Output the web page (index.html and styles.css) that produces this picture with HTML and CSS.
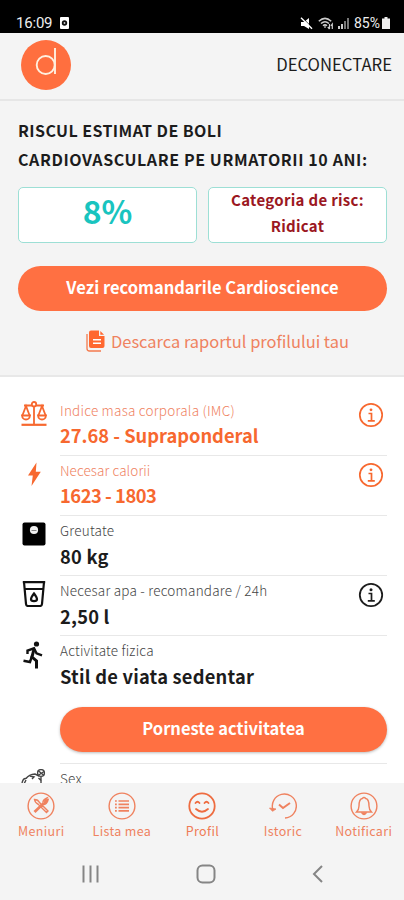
FILE: index.html
```html
<!DOCTYPE html>
<html lang="ro">
<head>
<meta charset="utf-8">
<title>Profil</title>
<link rel="stylesheet" href="styles.css">
</head>
<body>
<div class="phone">
  <div class="status">
    <span class="clock">16:09</span>
    <svg class="rec" width="9" height="12" viewBox="0 0 9 12"><rect width="9" height="12" rx="1" fill="#fff"/><circle cx="4.5" cy="6" r="2.7" fill="#111"/><circle cx="4.5" cy="6" r=".9" fill="#ccc"/></svg>
    <svg class="mute" width="13" height="13" viewBox="0 0 13 13"><path d="M1 5h3l5-4v11L4 9H1z" fill="#fff"/><path d="M2 .5l11 11" stroke="#000" stroke-width="1"/><path d="M1 .7l11 11" stroke="#fff" stroke-width="1.4"/></svg>
    <svg class="wifi" width="16" height="13" viewBox="0 0 16 13" fill="none" stroke="#ccc" stroke-width="1.5"><path d="M.8 4.2Q7 -1.5 13.2 4.2M3 6.5q4-3.5 8 0M5 8.8q2-1.8 4 0"/><path d="M7 9v2M11.5 7v5M9.8 10l1.7 2M14.3 12V7l-1.4 1.8" stroke-width="1.2"/></svg>
    <svg class="signal" width="11" height="11" viewBox="0 0 11 11"><path d="M0 8h2v3H0zM3 6h2v5H3z" fill="#ccc"/><path d="M6 3h2v8H6zM9 0h2v11H9z" fill="#777"/></svg>
    <span class="percent">85%</span>
    <svg class="battery" width="8" height="12" viewBox="0 0 8 12"><path d="M2.500 0h3v1.500H8V12H0V1.500h2.500z" fill="#eee"/></svg>
  </div>
  <header class="header">
    <svg class="logo" width="50" height="50" viewBox="0 0 50 50"><circle cx="25" cy="25" r="25" fill="#ff6f3f"/><g fill="none" stroke="#fff0df" stroke-width="1.9"><circle cx="24.700" cy="25" r="9"/><path d="M34 8v26"/></g></svg>
    <span class="logout">DECONECTARE</span>
  </header>
  <section class="risk">
    <h1 class="title"><span class="t1">RISCUL ESTIMAT DE BOLI</span><br><span class="t2">CARDIOVASCULARE PE URMATORII 10 ANI:</span></h1>
    <div class="cards">
      <div class="card score">8%</div>
      <div class="card category"><span>Categoria de risc:</span><span class="level">Ridicat</span></div>
    </div>
    <div class="button primary"><span>Vezi recomandarile Cardioscience</span></div>
    <div class="download">
      <svg width="19" height="22" viewBox="0 0 19 22"><path d="M5 .5h8v5.500h5.500V16a2 2 0 0 1-2 2H5a2 2 0 0 1-2-2V2.500a2 2 0 0 1 2-2z" fill="#ff6830"/><path d="M14.300 1l3.800 3.700h-3.800z" fill="#ff6830"/><path d="M7 9.700h8M7 13.200h8" stroke="#fff" stroke-width="1.400"/><path d="M1 4v14.500Q1 21 3.500 21H15" fill="none" stroke="#f47a4d" stroke-width="1.300"/></svg>
      <span>Descarca raportul profilului tau</span>
    </div>
  </section>
  <main class="list">
    <article class="row orange">
      <svg class="icon" width="26" height="26" viewBox="0 0 26 26" fill="none" stroke="currentColor" stroke-width="1.800"><path d="M.5 23.800h25" stroke-width="2.200"/><path d="M13 4v20M3 4.500h20M1.200 15L5 5l3.800 10M17.200 15L21 5l3.800 10"/><circle cx="13" cy="3.200" r="2.200" fill="#fff"/><path d="M1 14.500h8q-.5 4-4 4t-4-4zM17 14.500h8q-.5 4-4 4t-4-4z" fill="#fff"/></svg>
      <div class="content"><div class="label l1">Indice masa corporala (IMC)</div><div class="value v1">27.68 - Supraponderal</div></div>
      <svg class="info" width="26" height="26" viewBox="0 0 26 26" fill="none" stroke="currentColor"><circle cx="13" cy="13" r="11.200" stroke-width="1.700"/><path d="M10.500 11.500h3v7M9.800 18.800h7" stroke-width="1.700"/><circle cx="13" cy="7.800" r="1.400" fill="currentColor" stroke="none"/></svg>
    </article>
    <article class="row orange">
      <svg class="icon" width="26" height="26" viewBox="0 0 26 26"><path d="M15.500 1.500L7 14.500h4.800L10.500 25l9.300-14.300h-5z" fill="currentColor"/></svg>
      <div class="content"><div class="label l2">Necesar calorii</div><div class="value v2">1623 - 1803</div></div>
      <svg class="info" width="26" height="26" viewBox="0 0 26 26" fill="none" stroke="currentColor"><circle cx="13" cy="13" r="11.200" stroke-width="1.700"/><path d="M10.500 11.500h3v7M9.800 18.800h7" stroke-width="1.700"/><circle cx="13" cy="7.800" r="1.400" fill="currentColor" stroke="none"/></svg>
    </article>
    <article class="row">
      <svg class="icon" width="26" height="26" viewBox="0 0 26 26"><rect x="1.500" y="1.500" width="23" height="23" rx="2" fill="#000"/><circle cx="13" cy="9" r="4.100" fill="#f0f0f0"/><path d="M10.500 9.500h5" stroke="#888" stroke-width="1"/></svg>
      <div class="content"><div class="label l3">Greutate</div><div class="value v3">80 kg</div></div>
    </article>
    <article class="row">
      <svg class="icon" width="26" height="26" viewBox="0 0 26 26" fill="none" stroke="#111" stroke-width="2.200"><path d="M1.800 1.200h22.400M3 1l2 22q.2 2 2 2h12q1.800 0 2-2l2-22M4 8h18"/><path d="M13 12.500q-6 7.700 0 7.700t0-7.700z"/></svg>
      <div class="content"><div class="label l4">Necesar apa - recomandare / 24h</div><div class="value v4">2,50 l</div></div>
      <svg class="info" width="26" height="26" viewBox="0 0 26 26" fill="none" stroke="currentColor"><circle cx="13" cy="13" r="11.200" stroke-width="1.800"/><path d="M10.500 11.500h3v7M9.800 18.800h7" stroke-width="1.700"/><circle cx="13" cy="7.800" r="1.500" fill="currentColor" stroke="none"/></svg>
    </article>
    <article class="row activity">
      <svg class="icon" width="26" height="28" viewBox="0 0 26 28" fill="none" stroke="#111" stroke-width="2.400"><circle cx="15.500" cy="3" r="2.600" fill="#111" stroke="none"/><path d="M6.500 13V9.500L13 7.300l2.500 5 5.500 2"/><path d="M13 8l-2 8 4.500 4v7.500" stroke-width="3"/><path d="M11 15l-2 6-6.500-1.300"/></svg>
      <div class="content"><div class="label l5">Activitate fizica</div><div class="value v5">Stil de viata sedentar</div><div class="button start"><span>Porneste activitatea</span></div></div>
    </article>
    <article class="row last">
      <svg class="icon" width="26" height="26" viewBox="0 0 26 26" fill="none" stroke="#444" stroke-width="1.400"><path d="M1 14q1-5 4-4.500M5 9.500q3-4 9-4.500l4 2M9 7l4 1-2 2M3 15l2-4M20 8v6M17.500 9l3 3"/><circle cx="20" cy="4" r="3.400"/><path d="M17 1.500l6 5M17 6.500l6-4"/></svg>
      <div class="content"><div class="label l6">Sex</div></div>
    </article>
  </main>
  <nav class="tabs">
    <div class="tab"><svg width="28" height="28" viewBox="0 0 28 28" fill="none" stroke="currentColor" stroke-width="1.400"><circle cx="14" cy="14" r="12.900"/><path d="M7.500 7.500q3.500 0 5 3l8.500 8.500-1.500 1.500-8-8Q8 11 7.500 7.500zM7 19.500l9-8.500q-.5-3 4-5l-2.500 4M21 8q-1 4.500-5 4.500l-8 8z"/><path d="M17 11l4-4"/></svg><span class="n1">Meniuri</span></div>
    <div class="tab"><svg width="28" height="28" viewBox="0 0 28 28" fill="none" stroke="currentColor" stroke-width="1.400"><circle cx="14" cy="14" r="12.900"/><path d="M10.500 9h10.500M10.500 12.300h10.500M10.500 15.600h10.500M10.500 18.900h10.500M7 9h1.800M7 12.300h1.800M7 15.600h1.800M7 18.900h1.800" stroke-width="1.700"/></svg><span class="n2">Lista mea</span></div>
    <div class="tab active"><svg width="28" height="28" viewBox="0 0 28 28" fill="none" stroke="currentColor" stroke-width="1.800" stroke-linecap="round"><circle cx="14" cy="14" r="12.700"/><path d="M7.500 11q2-2.500 4 0M16.500 11q2-2.500 4 0M8 17q6 5.500 12 0"/></svg><span class="n3">Profil</span></div>
    <div class="tab"><svg width="28" height="28" viewBox="0 0 28 28" fill="none" stroke="currentColor" stroke-width="1.400"><path d="M4 18A12 12 0 1 1 16 26"/><path d="M.5 16l3 3.300L7 17z" fill="currentColor" stroke-width=".8"/><path d="M10 12.500l4 3.500 7-5" stroke-width="2"/></svg><span class="n4">Istoric</span></div>
    <div class="tab"><svg width="28" height="28" viewBox="0 0 28 28" fill="none" stroke="currentColor" stroke-width="1.400"><circle cx="14" cy="14" r="12.900"/><path d="M6.500 20q2.500-2.500 2.500-6 0-7 3.300-7.500 1.700-2 3.400 0Q19 7 19 14q0 3.500 2.500 6z"/><path d="M12 21q2 3 4 0z" fill="currentColor"/></svg><span class="n5">Notificari</span></div>
  </nav>
  <div class="system">
    <svg width="18" height="18" viewBox="0 0 18 18" stroke="#858585" stroke-width="2"><path d="M1.500 .5v17M8.500 .5v17M15.500 .5v17"/></svg>
    <svg width="20" height="20" viewBox="0 0 20 20" fill="none" stroke="#858585" stroke-width="2"><rect x="1.500" y="1.500" width="17" height="17" rx="5"/></svg>
    <svg width="12" height="18" viewBox="0 0 12 18" fill="none" stroke="#858585" stroke-width="2"><path d="M10 1L2 9l8 8"/></svg>
  </div>
</div>
</body>
</html>
```
FILE: styles.css
```css
* { box-sizing: border-box; }
body { margin: 0; background: #fff; font-family: "Noto Sans CJK SC", sans-serif; color: #1c1c1c; }
svg { display: block; flex: none; }
.phone { width: 404px; height: 900px; display: flex; flex-direction: column; overflow: hidden; white-space: nowrap; }
.status { flex: none; height: 33px; background: #000; color: #eee; display: flex; align-items: center; padding: 13px 14px 0 16px; font: 15px/20px Roboto, sans-serif; }
.clock { letter-spacing: -.2px; }
.rec { margin-left: 8px; }
.mute { margin-left: auto; }
.wifi { margin-left: 5px; }
.signal { margin-left: 4px; }
.percent { margin-left: 5px; font-size: 14px; }
.battery { margin-left: 2px; }
.header { flex: none; height: 68px; padding: 0 12px 2px 20.500px; background: #f4f4f4; border-bottom: 2px solid #e6e6e6; display: flex; align-items: center; justify-content: space-between; }
.logout { font-size: 16.700px; line-height: 24px; padding-bottom: 3px; }
.risk { flex: none; height: 276px; background: #f4f4f4; border-bottom: 2px solid #e8e8e8; padding: 15px 17px 0 18px; }
.title { margin: 0; font-size: 16px; line-height: 29px; font-weight: 700; }
.t1 { letter-spacing: .42px; }
.t2 { letter-spacing: .6px; }
.cards { display: grid; grid-template-columns: 1fr 1fr; gap: 11px; margin-top: 13px; }
.card { height: 56px; border: 1.500px solid #9ddfd5; border-radius: 5px; background: #fff; display: flex; flex-direction: column; align-items: center; justify-content: center; font-weight: 700; }
.score { color: #19c4bf; font-size: 32px; line-height: 40px; padding-bottom: 10px; }
.category { color: #9b1722; font-size: 15px; letter-spacing: .3px; line-height: 26px; padding-bottom: 4px; }
.button { display: flex; align-items: center; justify-content: center; border-radius: 23px; background: #ff7042; color: #fff; font-size: 16.500px; line-height: 24px; font-weight: 700; padding-bottom: 3px; }
.primary { height: 45px; margin-top: 23px; }
.download { display: flex; align-items: center; gap: 6px; margin: 18px 0 0 68px; font-size: 16.450px; line-height: 24px; color: #ef825f; }
.list { flex: 1; min-height: 0; overflow: hidden; padding: 19px 17px 0 20px; }
.row { display: flex; height: 60px; color: #1c1c1c; }
.icon { margin: 5px 13px 0 1px; }
.content { flex: 1; border-bottom: 1px solid #e8e8e8; }
.info { margin: 6px 3px 0 -29px; }
.orange { color: #f7682f; }
.label { font-size: 13.500px; letter-spacing: .23px; line-height: 22px; padding-top: 3px; height: 25px; font-weight: 300; color: #444; }
.l2 { letter-spacing: .08px; }
.l5 { letter-spacing: .2px; }
.orange .label { color: #ef825f; }
.value { font-size: 18.300px; line-height: 28px; font-weight: 700; }
.v2 { letter-spacing: -.45px; }
.v3, .v4, .v5 { padding-top: 1px; letter-spacing: .23px; }
.activity { height: 128px; }
.start { height: 45px; margin-top: 17px; box-shadow: 0 1px 3px #bbb; }
.tabs { flex: none; height: 65px; background: #f4f4f4; display: flex; padding: 9px 0 0 1px; }
.tab { width: 20%; display: flex; flex-direction: column; align-items: center; color: #ef825f; font-size: 12.500px; letter-spacing: .35px; line-height: 20px; }
.tab span { padding-top: 1px; }
.active { color: #ee6c40; }
.n3 { color: #ef7b55; }
.system { flex: none; height: 52px; background: #f4f4f4; display: flex; align-items: center; justify-content: space-between; padding: 0 80px 0 82px; }
```
